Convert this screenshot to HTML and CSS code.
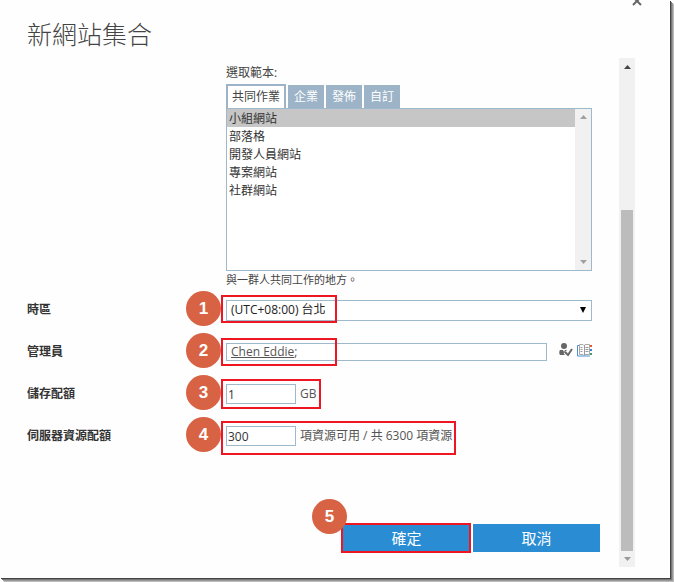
FILE: index.html
```html
<!DOCTYPE html>
<html lang="zh-Hant">
<head>
<meta charset="utf-8">
<meta name="viewport" content="width=device-width, initial-scale=1">
<title>新網站集合</title>
<link rel="stylesheet" href="styles.css">
</head>
<body>
<main class="dialog">
  <header class="header">
    <h1 class="title">新網站集合</h1>
    <button class="close" type="button" aria-label="關閉">
      <svg width="10" height="10" viewBox="0 0 10 10"><path d="M1 1l8 8M9 1l-8 8" stroke="#666" stroke-width="2" fill="none"/></svg>
    </button>
  </header>
  <div class="body">
    <form class="form">
      <div class="template">
        <label class="template-label" for="template">選取範本:</label>
        <div class="tabs" role="tablist">
          <button class="tab tab-active" type="button" role="tab" aria-selected="true">共同作業</button>
          <button class="tab" type="button" role="tab" aria-selected="false">企業</button>
          <button class="tab" type="button" role="tab" aria-selected="false">發佈</button>
          <button class="tab" type="button" role="tab" aria-selected="false">自訂</button>
        </div>
        <div class="listbox">
          <select class="list" id="template" size="8">
            <option selected>小組網站</option>
            <option>部落格</option>
            <option>開發人員網站</option>
            <option>專案網站</option>
            <option>社群網站</option>
          </select>
          <div class="list-scroll" aria-hidden="true">
            <svg width="7" height="4" viewBox="0 0 7 4"><path d="M0 4L3.500 0L7 4z" fill="#a0a0a0"/></svg>
            <svg width="7" height="4" viewBox="0 0 7 4"><path d="M0 0L3.500 4L7 0z" fill="#a0a0a0"/></svg>
          </div>
        </div>
        <p class="description">與一群人共同工作的地方。</p>
      </div>

      <div class="row">
        <label class="row-label" for="zone">時區</label>
        <div class="field">
          <select class="zone" id="zone"><option>(UTC+08:00) 台北</option></select>
          <svg class="zone-arrow" width="6" height="6" viewBox="0 0 6 6"><path d="M0 0H6L3 6z" fill="#000"/></svg>
          <span class="mark mark-wide"></span><span class="badge">1</span>
        </div>
      </div>

      <div class="row">
        <span class="row-label" id="admin-label">管理員</span>
        <div class="field" role="group" aria-labelledby="admin-label">
          <div class="people"><a class="person" href="#">Chen Eddie</a>;</div>
          <div class="tools">
            <button class="tool" type="button" aria-label="檢查名稱">
              <svg width="14" height="14" viewBox="0 0 14 14"><circle cx="5" cy="3" r="3" fill="#666"/><path d="M1 7h3l1 2 1-2h2l-1 2 1 3H1c-1-1-1-4 0-5z" fill="#666"/><path d="M6 9l3 3 4-6" fill="none" stroke="#fff" stroke-width="4"/><path d="M6 9l3 3 4-6" fill="none" stroke="#666" stroke-width="2"/></svg>
            </button>
            <button class="tool" type="button" aria-label="瀏覽">
              <svg width="15" height="13" viewBox="0 0 15 13"><path d="M2.500 .5H6l1 1 1-1h4.500v10H8l-1 1-1-1H2.500z" fill="#fff" stroke="#aaa"/><path d="M3.500 3.500h2M3.500 5.500h2M3.500 7.500h2M8.500 3.500h3M8.500 5.500h3M8.500 7.500h3M7.500 1v10" stroke="#999" fill="none"/><path d="M2 1.500H.5v10.500H13" fill="none" stroke="#4a8fd0"/><path d="M13 1h2v2h-2z" fill="#e8562a"/><path d="M13 5h2v2h-2z" fill="#3a7fd0"/><path d="M13 9h2v2h-2z" fill="#3f9a70"/></svg>
            </button>
          </div>
          <span class="mark mark-wide"></span><span class="badge">2</span>
        </div>
      </div>

      <div class="row">
        <label class="row-label" for="storage">儲存配額</label>
        <div class="field">
          <div class="quota">
            <input class="number" id="storage" type="text" value="1"><span>GB</span>
            <span class="mark mark-fit"></span>
          </div>
          <span class="badge">3</span>
        </div>
      </div>

      <div class="row">
        <label class="row-label" for="resource">伺服器資源配額</label>
        <div class="field">
          <div class="quota">
            <input class="number" id="resource" type="text" value="300"><span>項資源可用 / 共 6300 項資源</span>
            <span class="mark mark-tall"></span>
          </div>
          <span class="badge">4</span>
        </div>
      </div>

      <div class="actions">
        <div class="action">
          <button class="button" type="submit">確定</button>
          <span class="mark mark-button"></span><span class="badge badge-button">5</span>
        </div>
        <div class="action"><button class="button" type="button">取消</button></div>
      </div>
    </form>
    <div class="scrollbar" aria-hidden="true">
      <svg class="scroll-arrow" width="7" height="4" viewBox="0 0 7 4"><path d="M0 4L3.500 0L7 4z" fill="#444"/></svg>
      <span></span>
      <span class="thumb"></span>
      <svg class="scroll-arrow" width="7" height="4" viewBox="0 0 7 4"><path d="M0 0L3.500 4L7 0z" fill="#999"/></svg>
    </div>
  </div>
</main>
</body>
</html>
```
FILE: styles.css
```css
* { box-sizing: border-box; }

body {
  min-height: 100vh;
  margin: 0;
  padding: 0 4px 4px 0;
  background: #fff;
  color: #444;
  font: 12px/18px "Open Sans", "Noto Sans CJK TC", sans-serif;
}

button, input, select { font: inherit; color: inherit; margin: 0; border-radius: 0; }

.dialog {
  position: relative;
  min-height: calc(100vh - 4px);
  padding: 0 35px 11px 27px;
  background: #fefefe;
  box-shadow: 1px 1px 0 #444, 2px 2px 0 #777, 3px 3px 0 #999, 4px 4px 1px #bbb;
  overflow: hidden;
}

.header { height: 58px; padding-top: 16px; }
.title { margin: 0; font-size: 25px; line-height: 36px; font-weight: 300; color: #444; }
.close { position: absolute; top: -4px; right: 28px; padding: 0; border: 0; background: none; line-height: 0; }

.body { display: flex; gap: 19px; }
.form { flex: 1; min-width: 0; padding: 6px 0 15px; }

.template { margin: 0 8px 0 199px; }
.template-label { display: block; margin-bottom: 2px; }
.tabs { display: flex; align-items: flex-end; gap: 2px; height: 24px; }
.tab { height: 23px; padding: 0 5px; border: 1px solid #9db4c8; border-bottom: 0; background: #9db4c8; color: #fff; line-height: 22px; }
.tab-active { height: 24px; padding: 0 4px; border-width: 2px 2px 0; background: #fff; color: #444; }

.listbox { display: flex; height: 163px; border: 1px solid #9fb9cc; }
.list { flex: 1; min-width: 0; padding: 0; border: 0; outline: 0; background: #fff; overflow: hidden; }
.list option { min-height: 18px; height: 18px; padding: 0 2px; line-height: 18px; color: #333; }
.list option:checked { background: #c6c6c6 linear-gradient(#c6c6c6, #c6c6c6); color: #333; }
.list-scroll { display: flex; flex-direction: column; justify-content: space-between; align-items: center; width: 16px; padding: 6px 0; background: #f1f1f1; }
.description { margin: 0; font-size: 11px; }

.row { display: flex; align-items: center; height: 42px; padding-right: 8px; }
.row-label { flex: 0 0 199px; font-weight: 700; color: #333; }
.field { position: relative; display: flex; flex: 1; align-items: center; min-width: 0; }

.zone { width: 100%; height: 21px; padding: 0 4px; border: 1px solid #9fb9cc; background: #fff; appearance: none; color: #222; line-height: 18px; }
.zone-arrow { position: absolute; right: 6px; top: 7px; pointer-events: none; }
.people { flex: 1; height: 18px; padding: 0 4px; border: 1px solid #9fb9cc; background: #fff; line-height: 16px; color: #555; }
.person { color: inherit; }
.tools { display: flex; gap: 4px; margin-left: 12px; padding-bottom: 4px; }
.tool { display: flex; align-items: center; padding: 0; border: 0; background: none; }
.quota { position: relative; display: flex; align-items: center; gap: 4px; color: #555; }
.number { width: 70px; height: 20px; padding: 0 1px; border: 1px solid #9fb9cc; background: #fff; color: #333; }

.mark { position: absolute; border: 2px solid #ee1622; pointer-events: none; }
.mark-wide { top: -5px; left: -5px; width: 116px; height: 28px; }
.mark-fit { inset: -5px; }
.mark-tall { inset: -5px -4px -9px -5px; }
.mark-button { inset: -1px; left: -2px; }

.badge {
  position: absolute;
  top: calc(50% - 19px);
  left: -40px;
  width: 35px;
  height: 35px;
  border-radius: 50%;
  background: #d86344;
  color: #fff;
  font: bold 17px/35px "Liberation Sans", sans-serif;
  text-align: center;
}
.badge-button { top: -25px; left: -31px; }

.actions { display: flex; justify-content: flex-end; gap: 3px; margin-top: 67px; }
.action { position: relative; }
.button { display: block; width: 127px; height: 28px; padding: 0; border: 0; background: #2a8dd4; color: #fff; font-size: 15px; line-height: 28px; }

.scrollbar { display: grid; grid-template-rows: 17px 135fr 341fr 16px; width: 16px; background: #f1f1f1; }
.scroll-arrow { place-self: center; }
.thumb { margin: 0 2px; background: #bcbcbc; }
```
